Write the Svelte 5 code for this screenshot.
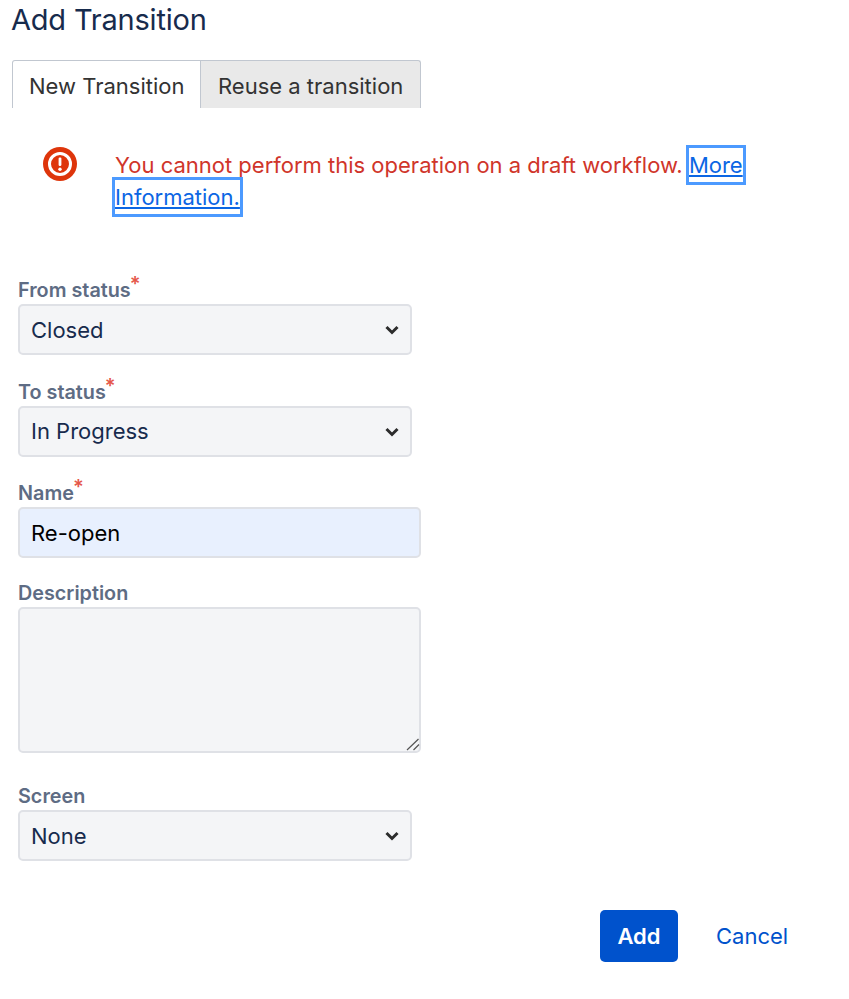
<script lang="ts">
    const fromOptions = ["Closed"];
    const toOptions = ["In Progress"];
    const screenOptions = ["None"];
</script>

{#snippet chevron()}
    <svg class="chevron" width="14" height="10" viewBox="0 0 14 10" aria-hidden="true">
        <path d="M1.5 2 L7 7.5 L12.5 2" fill="none" stroke="#2c2c2c" stroke-width="3" />
    </svg>
{/snippet}

<div class="dialog">
    <h2>Add Transition</h2>

    <div class="tabs">
        <div class="tab active">New Transition</div>
        <div class="tab">Reuse a transition</div>
    </div>

    <div class="alert">
        <svg class="alert-icon" width="34" height="34" viewBox="0 0 34 34" aria-hidden="true">
            <circle cx="17" cy="17" r="17" fill="#de350b" />
            <circle cx="17" cy="17" r="10.5" fill="none" stroke="#fff" stroke-width="3" />
            <rect x="15.6" y="10.5" width="2.8" height="8.5" rx="1.2" fill="#fff" />
            <circle cx="17" cy="22.2" r="1.7" fill="#fff" />
        </svg>
        <p>You cannot perform this operation on a draft workflow. <a href="#more">More Information.</a></p>
    </div>

    <form class="fields" onsubmit={(e) => e.preventDefault()}>
        <div class="field">
            <label for="from">From status<span class="req">*</span></label>
            <div class="select-wrap">
                <select id="from">
                    {#each fromOptions as o}<option>{o}</option>{/each}
                </select>
                {@render chevron()}
            </div>
        </div>
        <div class="field">
            <label for="to">To status<span class="req">*</span></label>
            <div class="select-wrap">
                <select id="to">
                    {#each toOptions as o}<option>{o}</option>{/each}
                </select>
                {@render chevron()}
            </div>
        </div>
        <div class="field name">
            <label for="name">Name<span class="req">*</span></label>
            <input id="name" type="text" value="Re-open" />
        </div>
        <div class="field desc">
            <label for="desc">Description</label>
            <div class="textarea-wrap">
                <textarea id="desc"></textarea>
                <svg class="grip" width="14" height="13" viewBox="0 0 14 13" aria-hidden="true">
                    <path d="M1 12 L12.5 1 M7.5 12 L13 6.5" fill="none" stroke="#555" stroke-width="1.2" />
                </svg>
            </div>
        </div>
        <div class="field">
            <label for="screen">Screen</label>
            <div class="select-wrap">
                <select id="screen">
                    {#each screenOptions as o}<option>{o}</option>{/each}
                </select>
                {@render chevron()}
            </div>
        </div>

        <div class="actions">
            <button type="submit">Add</button>
            <a class="cancel" href="#cancel">Cancel</a>
        </div>
    </form>
</div>

<style>
    :global(body) {
        background: #fff;
    }

    .dialog {
        width: 849px;
        height: 999px;
        padding: 2px 0 0 12px;
        box-sizing: border-box;
        overflow: hidden;
        font-family: Inter, "Liberation Sans", sans-serif;
    }

    h2 {
        margin: 0 0 0 -1px;
        font-size: 29px;
        line-height: 35px;
        font-weight: 400;
        letter-spacing: -0.2px;
        color: #172b4d;
    }

    .tabs {
        display: flex;
        width: 409px;
        height: 48px;
        margin-top: 23px;
    }

    .tab {
        box-sizing: border-box;
        height: 48px;
        padding: 11px 10px 0 17px;
        border: 1px solid #c1c7d0;
        border-bottom: 0;
        font-size: 22px;
        line-height: 28px;
        color: #333;
        background: #e9e9e9;
        border-radius: 0 3px 0 0;
        border-left: 0;
        flex: 1;
        white-space: nowrap;
    }

    .tab.active {
        flex: 0 0 189px;
        padding-left: 16px;
        background: #fff;
        border-left: 1px solid #c1c7d0;
        border-radius: 3px 0 0 0;
    }

    .alert {
        display: flex;
        width: 720px;
        margin-top: 39px;
        padding-left: 31px;
    }

    .alert-icon {
        flex: none;
    }

    .alert p {
        margin: 2px 0 0 38px;
        font-size: 22px;
        line-height: 32px;
        color: #d0352a;
    }

    .alert a {
        padding: 4px 0;
        color: #0b66e4;
        text-decoration: underline;
        outline: 3px solid #4c9aff;
        outline-offset: 0;
    }

    .fields {
        display: flex;
        flex-direction: column;
        width: 403px;
        margin: 65px 0 0 6px;
    }

    .field {
        display: flex;
        flex-direction: column;
        margin-bottom: 24.5px;
    }

    .field.name {
        margin-bottom: 23px;
    }

    .field.desc {
        margin-bottom: 31px;
    }

    label {
        height: 26px;
        font-size: 19.8px;
        line-height: 25px;
        font-weight: 600;
        color: #5e6c84;
    }

    .req {
        position: relative;
        top: -6px;
        margin-left: -1px;
        font-size: 20px;
        line-height: 1;
        color: #e5574a;
    }

    .select-wrap {
        position: relative;
        width: 394px;
    }

    .textarea-wrap {
        position: relative;
    }

    select,
    input,
    textarea {
        box-sizing: border-box;
        display: block;
        width: 100%;
        margin: 0;
        padding: 0 11px;
        border: 2px solid #dfe1e6;
        border-radius: 5px;
        background: #f4f5f7;
        font-family: inherit;
        font-size: 22px;
        color: #172b4d;
        outline: none;
    }

    select {
        height: 51px;
        appearance: none;
    }

    .chevron {
        position: absolute;
        right: 13px;
        top: 21px;
    }

    input {
        height: 51px;
        background: #e8f0fe;
        color: #000;
    }

    textarea {
        height: 146px;
        padding: 8px 11px;
        resize: none;
    }

    .grip {
        position: absolute;
        right: 1px;
        bottom: 2px;
    }

    .actions {
        display: flex;
        align-items: center;
        gap: 38px;
        margin: 24.5px 0 0 582px;
        width: 300px;
    }

    button {
        width: 78px;
        height: 52px;
        padding: 0;
        border: 0;
        border-radius: 5px;
        background: #0052cc;
        color: #fff;
        font-family: inherit;
        font-size: 22px;
        font-weight: 600;
    }

    .cancel {
        font-size: 22px;
        color: #0052cc;
        text-decoration: none;
    }
</style>
